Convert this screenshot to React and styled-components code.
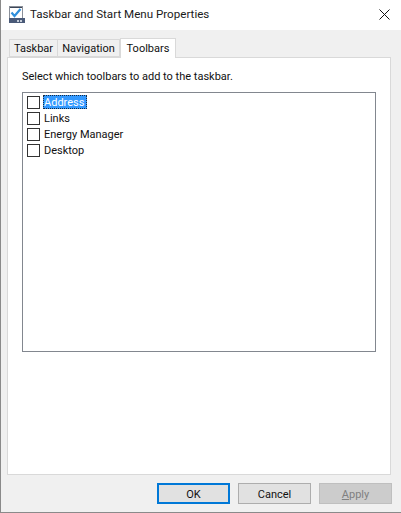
import React from "react";
import styled, { createGlobalStyle } from "styled-components";

const GlobalStyle = createGlobalStyle`
  html, body {
    margin: 0;
    padding: 0;
    background: #fff;
  }
`;

const Window = styled.div`
  width: 401px;
  height: 513px;
  box-sizing: border-box;
  display: flex;
  flex-direction: column;
  border-left: 1px solid #8a8a8a;
  border-bottom: 1px solid #8a8a8a;
  font-family: Roboto, "Noto Sans", sans-serif;
  font-size: 11px;
  color: #000;
  overflow: hidden;
`;

const TitleBar = styled.div`
  height: 30px;
  flex: none;
  display: flex;
  align-items: center;
  padding: 0 11px 2px 8px;
  box-sizing: border-box;
  background: #fff;
  gap: 5px;
  .title {
    flex: 1;
    font-size: 11.6px;
    color: #1a1a1a;
  }
`;

const Body = styled.div`
  flex: 1;
  display: flex;
  flex-direction: column;
  background: #f0f0f0;
  padding: 8px 9px 8px 6px;
  min-height: 0;
`;

const TabRow = styled.div`
  display: flex;
  align-items: flex-end;
  height: 19px;
  padding-left: 2px;
  position: relative;
  z-index: 1;
  flex: none;
`;

const Tab = styled.div`
  box-sizing: border-box;
  width: ${(p) => p.$width}px;
  height: ${(p) => (p.$active ? 20 : 18)}px;
  margin-bottom: ${(p) => (p.$active ? -1 : 0)}px;
  padding-top: ${(p) => (p.$active ? 0 : 1)}px;
  display: flex;
  align-items: center;
  justify-content: center;
  background: ${(p) => (p.$active ? "#fff" : "#f0f0f0")};
  border: 1px solid #d9d9d9;
  border-bottom: ${(p) => (p.$active ? "none" : "1px solid #d9d9d9")};
  border-left: ${(p) => (p.$first || p.$active ? "1px solid #d9d9d9" : "none")};
  color: #111;
`;

const Panel = styled.div`
  flex: 1;
  display: flex;
  flex-direction: column;
  background: #fff;
  border: 1px solid #d9d9d9;
  margin-right: 1px;
  padding: 10px 14px 122px 14px;
  min-height: 0;
`;

const Hint = styled.div`
  height: 17px;
  line-height: 17px;
  margin-bottom: 7px;
  color: #111;
`;

const ListBox = styled.div`
  flex: 1;
  border: 1px solid #82878f;
  background: #fff;
  padding: 2px 0 0 4px;
`;

const Row = styled.div`
  display: flex;
  align-items: flex-start;
  height: 16px;
  gap: 3px;
`;

const Box = styled.span`
  box-sizing: border-box;
  width: 13px;
  height: 13px;
  margin-top: 1px;
  border: 1px solid #333;
  background: #fff;
`;

const Label = styled.span`
  height: 14px;
  line-height: 15px;
  padding: 0 3px 0 1px;
  color: ${(p) => (p.$selected ? "#fff" : "#111")};
  background: ${(p) => (p.$selected ? "#3399ff" : "transparent")};
  outline: ${(p) => (p.$selected ? "1px dotted #1a2b40" : "none")};
  outline-offset: -1px;
`;

const Footer = styled.div`
  flex: none;
  display: flex;
  justify-content: flex-end;
  gap: 8px;
  padding-top: 8px;
`;

const Button = styled.div`
  box-sizing: border-box;
  width: 73px;
  height: 21px;
  padding-top: 1px;
  display: flex;
  align-items: center;
  justify-content: center;
  background: ${(p) => (p.$disabled ? "#cccccc" : "#e1e1e1")};
  color: ${(p) => (p.$disabled ? "#808080" : "#111")};
  border: ${(p) =>
    p.$primary
      ? "2px solid #0078d7"
      : p.$disabled
      ? "1px solid #bfbfbf"
      : "1px solid #adadad"};
  u {
    text-underline-offset: 1px;
  }
`;

function AppIcon() {
  return (
    <svg width="16" height="17" viewBox="0 0 16 17">
      <rect x="0.5" y="0.5" width="13" height="15" fill="#fff" stroke="#8a8f98" />
      <rect x="1" y="1" width="12" height="1" fill="#3c4658" />
      <rect x="0" y="12" width="16" height="5" fill="#4a5a78" />
      <rect x="8" y="14" width="2" height="2" fill="#c4ccd8" />
      <rect x="11" y="14" width="2" height="2" fill="#c4ccd8" />
      <path d="M2.5 6.5 L5.5 10 L11.5 3" fill="none" stroke="#2f8fdc" strokeWidth="2.2" />
    </svg>
  );
}

function CloseIcon() {
  return (
    <svg width="11" height="11" viewBox="0 0 11 11">
      <path d="M0.5 0.5 L10.5 10.5 M10.5 0.5 L0.5 10.5" stroke="#111" strokeWidth="1" fill="none" />
    </svg>
  );
}

const toolbars = ["Address", "Links", "Energy Manager", "Desktop"];

export default function App() {
  return (
    <Window>
      <GlobalStyle />
      <TitleBar>
        <AppIcon />
        <span className="title">Taskbar and Start Menu Properties</span>
        <CloseIcon />
      </TitleBar>
      <Body>
        <TabRow>
          <Tab $first $width={49}>Taskbar</Tab>
          <Tab $width={62}>Navigation</Tab>
          <Tab $active $width={56}>Toolbars</Tab>
        </TabRow>
        <Panel>
          <Hint>Select which toolbars to add to the taskbar.</Hint>
          <ListBox>
            {toolbars.map((name, i) => (
              <Row key={name}>
                <Box />
                <Label $selected={i === 0}>{name}</Label>
              </Row>
            ))}
          </ListBox>
        </Panel>
        <Footer>
          <Button $primary>OK</Button>
          <Button>Cancel</Button>
          <Button $disabled><span><u>A</u>pply</span></Button>
        </Footer>
      </Body>
    </Window>
  );
}
